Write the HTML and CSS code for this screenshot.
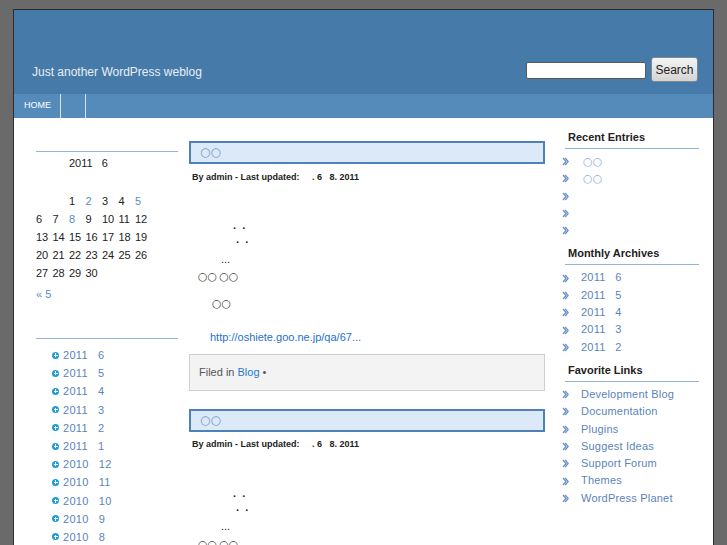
FILE: index.html
```html
<!DOCTYPE html>
<html>
<head>
<meta charset="utf-8">
<title>Just another WordPress weblog</title>
<link rel="stylesheet" href="styles.css">
</head>
<body>
<div class="wrap">
  <header class="header">
    <div class="tagline">Just another WordPress weblog</div>
    <form class="search">
      <input class="search-input" type="text">
      <button class="search-btn" type="button">Search</button>
    </form>
  </header>
  <nav class="nav">
    <ul class="nav-list">
      <li class="nav-item nav-home">HOME</li>
      <li class="nav-item nav-blank"></li>
    </ul>
  </nav>
  <div class="content">
    <aside class="left">
      <div class="lwidget">
        <h3 class="lhead"></h3>
        <div class="cal-caption">2011&nbsp;&nbsp;&nbsp;6</div>
        <div class="cal-grid">
          <span class="cal-head"></span><span class="cal-head"></span><span class="cal-head"></span><span class="cal-head"></span><span class="cal-head"></span><span class="cal-head"></span><span class="cal-head"></span>
          <span></span><span></span><span>1</span><span class="cal-link">2</span><span>3</span><span>4</span><span class="cal-link">5</span>
          <span>6</span><span>7</span><span class="cal-link">8</span><span>9</span><span>10</span><span>11</span><span>12</span>
          <span>13</span><span>14</span><span>15</span><span>16</span><span>17</span><span>18</span><span>19</span>
          <span>20</span><span>21</span><span>22</span><span>23</span><span>24</span><span>25</span><span>26</span>
          <span>27</span><span>28</span><span>29</span><span>30</span><span></span><span></span><span></span>
        </div>
        <div class="cal-foot">&laquo; 5</div>
      </div>
      <div class="lwidget lwidget-2">
        <h3 class="lhead"></h3>
        <ul class="llist">
          <li><span class="plus"></span>2011&nbsp;&nbsp;&nbsp;6</li>
          <li><span class="plus"></span>2011&nbsp;&nbsp;&nbsp;5</li>
          <li><span class="plus"></span>2011&nbsp;&nbsp;&nbsp;4</li>
          <li><span class="plus"></span>2011&nbsp;&nbsp;&nbsp;3</li>
          <li><span class="plus"></span>2011&nbsp;&nbsp;&nbsp;2</li>
          <li><span class="plus"></span>2011&nbsp;&nbsp;&nbsp;1</li>
          <li><span class="plus"></span>2010&nbsp;&nbsp;&nbsp;12</li>
          <li><span class="plus"></span>2010&nbsp;&nbsp;&nbsp;11</li>
          <li><span class="plus"></span>2010&nbsp;&nbsp;&nbsp;10</li>
          <li><span class="plus"></span>2010&nbsp;&nbsp;&nbsp;9</li>
          <li><span class="plus"></span>2010&nbsp;&nbsp;&nbsp;8</li>
        </ul>
      </div>
    </aside>

    <main class="main">
      <article class="post">
        <h2 class="post-title"><span class="circ">○○</span></h2>
        <div class="post-meta">By admin - Last updated:&nbsp;&nbsp;&nbsp;&nbsp;&nbsp;.&nbsp;6&nbsp;&nbsp;&nbsp;8.&nbsp;2011</div>
        <div class="post-body">
          <p class="ln ln1"><b>.&nbsp;&nbsp;.</b></p>
          <p class="ln ln2"><b>.&nbsp;&nbsp;.</b></p>
          <p class="ln ln3">...</p>
          <p class="ln ln4"><span class="circ">○○</span><span class="circ circ-gap">○○</span></p>
          <p class="ln ln5"><span class="circ">○○</span></p>
          <p class="ln ln6"><a class="plink" href="#">http://oshiete.goo.ne.jp/qa/67...</a></p>
        </div>
        <div class="filed">Filed in <a class="blink" href="#">Blog</a> &bull;</div>
      </article>
      <article class="post post-2">
        <h2 class="post-title"><span class="circ">○○</span></h2>
        <div class="post-meta">By admin - Last updated:&nbsp;&nbsp;&nbsp;&nbsp;&nbsp;.&nbsp;6&nbsp;&nbsp;&nbsp;8.&nbsp;2011</div>
        <div class="post-body">
          <p class="ln ln1"><b>.&nbsp;&nbsp;.</b></p>
          <p class="ln ln2"><b>.&nbsp;&nbsp;.</b></p>
          <p class="ln ln3">...</p>
          <p class="ln ln4"><span class="circ">○○</span><span class="circ circ-gap">○○</span></p>
        </div>
      </article>
    </main>

    <aside class="right">
      <h3 class="rhead">Recent Entries</h3>
      <ul class="rlist">
        <li><svg class="chev" viewBox="0 0 7 9" width="7" height="9"><path d="M1 1 L4 4.5 L1 8 M3.2 1 L6.2 4.5 L3.2 8" fill="none" stroke="#6b93c7" stroke-width="1.3"/></svg><a class="rlink circ-light" href="#">○○</a></li>
        <li><svg class="chev" viewBox="0 0 7 9" width="7" height="9"><path d="M1 1 L4 4.5 L1 8 M3.2 1 L6.2 4.5 L3.2 8" fill="none" stroke="#6b93c7" stroke-width="1.3"/></svg><a class="rlink circ-light" href="#">○○</a></li>
        <li><svg class="chev" viewBox="0 0 7 9" width="7" height="9"><path d="M1 1 L4 4.5 L1 8 M3.2 1 L6.2 4.5 L3.2 8" fill="none" stroke="#6b93c7" stroke-width="1.3"/></svg></li>
        <li><svg class="chev" viewBox="0 0 7 9" width="7" height="9"><path d="M1 1 L4 4.5 L1 8 M3.2 1 L6.2 4.5 L3.2 8" fill="none" stroke="#6b93c7" stroke-width="1.3"/></svg></li>
        <li><svg class="chev" viewBox="0 0 7 9" width="7" height="9"><path d="M1 1 L4 4.5 L1 8 M3.2 1 L6.2 4.5 L3.2 8" fill="none" stroke="#6b93c7" stroke-width="1.3"/></svg></li>
      </ul>
      <h3 class="rhead">Monthly Archives</h3>
      <ul class="rlist">
        <li><svg class="chev" viewBox="0 0 7 9" width="7" height="9"><path d="M1 1 L4 4.5 L1 8 M3.2 1 L6.2 4.5 L3.2 8" fill="none" stroke="#6b93c7" stroke-width="1.3"/></svg><a class="rlink" href="#">2011&nbsp;&nbsp;&nbsp;6</a></li>
        <li><svg class="chev" viewBox="0 0 7 9" width="7" height="9"><path d="M1 1 L4 4.5 L1 8 M3.2 1 L6.2 4.5 L3.2 8" fill="none" stroke="#6b93c7" stroke-width="1.3"/></svg><a class="rlink" href="#">2011&nbsp;&nbsp;&nbsp;5</a></li>
        <li><svg class="chev" viewBox="0 0 7 9" width="7" height="9"><path d="M1 1 L4 4.5 L1 8 M3.2 1 L6.2 4.5 L3.2 8" fill="none" stroke="#6b93c7" stroke-width="1.3"/></svg><a class="rlink" href="#">2011&nbsp;&nbsp;&nbsp;4</a></li>
        <li><svg class="chev" viewBox="0 0 7 9" width="7" height="9"><path d="M1 1 L4 4.5 L1 8 M3.2 1 L6.2 4.5 L3.2 8" fill="none" stroke="#6b93c7" stroke-width="1.3"/></svg><a class="rlink" href="#">2011&nbsp;&nbsp;&nbsp;3</a></li>
        <li><svg class="chev" viewBox="0 0 7 9" width="7" height="9"><path d="M1 1 L4 4.5 L1 8 M3.2 1 L6.2 4.5 L3.2 8" fill="none" stroke="#6b93c7" stroke-width="1.3"/></svg><a class="rlink" href="#">2011&nbsp;&nbsp;&nbsp;2</a></li>
      </ul>
      <h3 class="rhead">Favorite Links</h3>
      <ul class="rlist">
        <li><svg class="chev" viewBox="0 0 7 9" width="7" height="9"><path d="M1 1 L4 4.5 L1 8 M3.2 1 L6.2 4.5 L3.2 8" fill="none" stroke="#6b93c7" stroke-width="1.3"/></svg><a class="rlink" href="#">Development Blog</a></li>
        <li><svg class="chev" viewBox="0 0 7 9" width="7" height="9"><path d="M1 1 L4 4.5 L1 8 M3.2 1 L6.2 4.5 L3.2 8" fill="none" stroke="#6b93c7" stroke-width="1.3"/></svg><a class="rlink" href="#">Documentation</a></li>
        <li><svg class="chev" viewBox="0 0 7 9" width="7" height="9"><path d="M1 1 L4 4.5 L1 8 M3.2 1 L6.2 4.5 L3.2 8" fill="none" stroke="#6b93c7" stroke-width="1.3"/></svg><a class="rlink" href="#">Plugins</a></li>
        <li><svg class="chev" viewBox="0 0 7 9" width="7" height="9"><path d="M1 1 L4 4.5 L1 8 M3.2 1 L6.2 4.5 L3.2 8" fill="none" stroke="#6b93c7" stroke-width="1.3"/></svg><a class="rlink" href="#">Suggest Ideas</a></li>
        <li><svg class="chev" viewBox="0 0 7 9" width="7" height="9"><path d="M1 1 L4 4.5 L1 8 M3.2 1 L6.2 4.5 L3.2 8" fill="none" stroke="#6b93c7" stroke-width="1.3"/></svg><a class="rlink" href="#">Support Forum</a></li>
        <li><svg class="chev" viewBox="0 0 7 9" width="7" height="9"><path d="M1 1 L4 4.5 L1 8 M3.2 1 L6.2 4.5 L3.2 8" fill="none" stroke="#6b93c7" stroke-width="1.3"/></svg><a class="rlink" href="#">Themes</a></li>
        <li><svg class="chev" viewBox="0 0 7 9" width="7" height="9"><path d="M1 1 L4 4.5 L1 8 M3.2 1 L6.2 4.5 L3.2 8" fill="none" stroke="#6b93c7" stroke-width="1.3"/></svg><a class="rlink" href="#">WordPress Planet</a></li>
      </ul>
    </aside>
  </div>
</div>
</body>
</html>
```

FILE: styles.css
```css
* { box-sizing: border-box; }
html, body { margin: 0; padding: 0; }
body {
  background: #6a6a6a;
  font-family: "Liberation Sans", Arial, sans-serif;
  font-size: 11px;
  color: #222;
  padding-top: 9px;
}
a { text-decoration: none; }
ul { list-style: none; margin: 0; padding: 0; }
h2, h3, p { margin: 0; }

.wrap {
  width: 701px;
  margin: 0 auto;
  border: 1px solid #2c2c2c;
  border-bottom: 0;
  background: #fff;
}

.header {
  height: 84px;
  background: #467aa8;
  display: flex;
  justify-content: space-between;
  align-items: center;
  padding: 35px 15px 0 18px;
}
.tagline {
  color: #e8eef5;
  font-size: 12px;
  margin-top: 5px;
}
.search { display: flex; align-items: center; }
.search-input {
  width: 120px;
  height: 17px;
  border: 1px solid #5a5a5a;
  border-radius: 2px;
  background: #fff;
  margin: 2px 5px 0 0;
  padding: 0;
}
.search-btn {
  width: 47px;
  height: 25px;
  border: 1px solid #7d8a96;
  border-radius: 3px;
  background: linear-gradient(#f4f4f4, #d4d4d4);
  font-family: "Liberation Sans", Arial, sans-serif;
  font-size: 12px;
  color: #222;
  padding: 0;
}

.nav {
  height: 24px;
  background: #558bbb;
}
.nav-list { display: flex; height: 24px; }
.nav-item {
  height: 24px;
  border-right: 1px solid #d8e4ef;
  color: #fff;
  font-size: 9px;
  line-height: 23px;
}
.nav-home { width: 47px; padding-left: 10px; }
.nav-blank { width: 25px; }

.content {
  display: flex;
  align-items: flex-start;
  padding: 0 13px 0 22px;
  height: 440px;
}

/* left sidebar */
.left { width: 142px; margin-right: 11px; padding-top: 14px; }
.lhead {
  height: 20px;
  border-bottom: 1px solid #8fb4de;
}
.cal-caption {
  line-height: 18px;
  margin-top: 2px;
  padding-left: 33px;
  color: #222;
}
.cal-grid {
  display: grid;
  grid-template-columns: repeat(7, 16.5px);
  grid-auto-rows: 18px;
  line-height: 18px;
  color: #222;
  margin-top: 2px;
}
.cal-head { height: 18px; }
.cal-link { color: #5b8cc4; }
.cal-foot {
  margin-top: 3px;
  line-height: 18px;
  color: #5b8cc4;
}
.lwidget-2 { margin-top: 16px; }
.llist { margin-top: 7px; padding-left: 16px; }
.llist li {
  line-height: 18.2px;
  height: 18.2px;
  color: #5b84ba;
  letter-spacing: 0.3px;
  display: flex;
  align-items: center;
}
.plus {
  position: relative;
  width: 7px;
  height: 7px;
  border-radius: 50%;
  background: #1f9bd8;
  margin-right: 4px;
  flex: none;
}
.plus::before, .plus::after {
  content: "";
  position: absolute;
  background: #fff;
}
.plus::before { left: 1.5px; top: 3px; width: 4px; height: 1px; }
.plus::after { left: 3px; top: 1.5px; width: 1px; height: 4px; }

/* main */
.main { width: 356px; margin-right: 17px; padding-top: 23px; }
.post-title {
  height: 23px;
  border: 2px solid #4f80b7;
  background: #dce9f9;
  padding-left: 9px;
  font-weight: normal;
  font-size: 12px;
  line-height: 19px;
  color: #7393c2;
}
.circ { font-family: "DejaVu Sans", sans-serif; }
.post-meta {
  margin-top: 7px;
  padding-left: 3px;
  font-size: 9px;
  font-weight: bold;
  line-height: 12px;
  color: #222;
}
.post-body { font-size: 11px; color: #222; }
.ln { line-height: 14px; }
.ln1 { margin-top: 35px; padding-left: 44px; }
.ln2 { padding-left: 47px; }
.ln3 { margin-top: 6px; padding-left: 32px; }
.ln4 { margin-top: 3px; padding-left: 9px; color: #444; }
.ln5 { margin-top: 12px; padding-left: 23px; color: #444; }
.ln6 { margin-top: 19px; padding-left: 21px; }
.circ-gap { margin-left: 2px; }
.plink { color: #1f6fd0; }
.filed {
  margin-top: 10px;
  height: 37px;
  border: 1px solid #cfcfcf;
  background: #f3f3f3;
  padding: 10px 0 0 9px;
  line-height: 14px;
  color: #555;
}
.blink { color: #1f78d1; }
.post-2 { margin-top: 18px; }
.post-2 .post-meta { margin-top: 6px; }
.post-2 .ln1 { margin-top: 36px; }
.post-2 .ln3 { margin-top: 5px; }
.post-2 .ln4 { margin-top: 4px; }

/* right sidebar */
.right { width: 137px; padding-top: 10px; }
.rhead {
  margin-left: 3px;
  padding-left: 3px;
  font-size: 11px;
  font-weight: bold;
  line-height: 19px;
  padding-bottom: 1px;
  border-bottom: 1px solid #8fb4de;
  color: #222;
}
.rlist { margin: 4px 0 5px; }
.rlist li {
  height: 17.3px;
  line-height: 17.3px;
  display: flex;
  align-items: center;
}
.chev { flex: none; margin-right: 12px; }
.rlink { color: #5b84ba; letter-spacing: 0.2px; }
.circ-light { color: #8eaad6; font-family: "DejaVu Sans", sans-serif; margin-left: 2px; }
```
